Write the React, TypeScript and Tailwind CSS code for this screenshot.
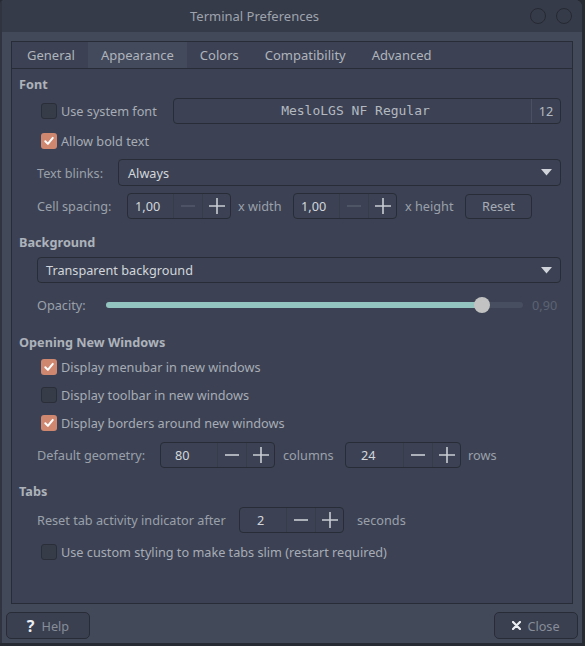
import React from "react";

const Check = ({ checked }: { checked: boolean }) =>
  checked ? (
    <div className="w-[16px] h-[16px] rounded-[3px] bg-[#d08770] flex items-center justify-center shrink-0">
      <svg width="12" height="12" viewBox="0 0 12 12">
        <path d="M2.3 6.3 L4.9 8.9 L9.8 2.9" stroke="#ffffff" strokeWidth="2" fill="none" strokeLinecap="round" strokeLinejoin="round" />
      </svg>
    </div>
  ) : (
    <div className="w-[16px] h-[16px] rounded-[3px] bg-[#373c49] border border-[#2a2e38] shrink-0" />
  );

const CheckRow = ({ checked, label, extra }: { checked: boolean; label: string; extra?: string }) => (
  <div className={`flex items-center h-[20px] pl-[22px] ${extra ?? ""}`}>
    <Check checked={checked} />
    <span className="ml-[4px] text-[#a7acb6]">{label}</span>
  </div>
);

const Minus = ({ dim }: { dim?: boolean }) => (
  <svg width="14" height="14" viewBox="0 0 14 14">
    <path d="M0 7 H14" stroke={dim ? "#535a6a" : "#c9cdd4"} strokeWidth="1.6" />
  </svg>
);
const Plus = () => (
  <svg width="16" height="16" viewBox="0 0 16 16">
    <path d="M0 8 H16 M8 0 V16" stroke="#c9cdd4" strokeWidth="1.6" />
  </svg>
);

const Spin = ({
  value,
  wClass,
  padClass,
  minusDim,
}: {
  value: string;
  wClass: string;
  padClass: string;
  minusDim?: boolean;
}) => (
  <div className={`flex h-[26px] rounded-[4px] border border-[#282c36] bg-[#3c4253] ${wClass}`}>
    <div className={`flex-1 flex items-center text-[#d2d6dc] ${padClass}`}>{value}</div>
    <div className="w-[29px] flex items-center justify-center border-l border-[#363c4a]">
      <Minus dim={minusDim} />
    </div>
    <div className="w-[28px] flex items-center justify-center border-l border-[#363c4a]">
      <Plus />
    </div>
  </div>
);

const Arrow = () => (
  <svg width="11" height="7" viewBox="0 0 11 7">
    <path d="M0 0 H11 L5.5 6.5 Z" fill="#d0d4da" />
  </svg>
);

export default function App() {
  return (
    <div
      className="w-[585px] h-[646px] bg-[#262a32] text-[12.7px] leading-[18px] overflow-hidden"
      style={{ fontFamily: '"Noto Sans", "Open Sans", sans-serif' }}
    >
      <div className="w-[582px] h-[643px] flex flex-col bg-[#424959] rounded-tl-[4px] rounded-tr-[7px] border-l-2 border-[#2f3440] overflow-hidden">
        {/* Title bar */}
        <div className="h-[32px] bg-[#363b49] flex items-center shrink-0">
          <div className="flex-1 text-center pr-[23px] text-[#9ea3ad] text-[13px]">Terminal Preferences</div>
          <div className="flex gap-[10px] pr-[10px]">
            <div className="w-[16px] h-[16px] rounded-full border-[1.5px] border-[#252932]" />
            <div className="w-[16px] h-[16px] rounded-full border-[1.5px] border-[#252932]" />
          </div>
        </div>

        {/* Body */}
        <div className="pl-[9px] pt-[9px]">
          <div className="w-[562px] h-[563px] border border-[#282c36] bg-[#3c4253] flex flex-col">
            {/* Tabs */}
            <div className="h-[27px] border-b border-[#282c36] flex pl-[2px] text-[#afb4bd] text-[13px] shrink-0">
              <div className="px-[13px] flex items-center">General</div>
              <div className="px-[13px] flex items-center bg-[#434a5b]">Appearance</div>
              <div className="px-[13px] flex items-center">Colors</div>
              <div className="px-[13px] flex items-center">Compatibility</div>
              <div className="px-[13px] flex items-center">Advanced</div>
            </div>

            {/* Content */}
            <div className="pl-[7px] pr-[11px] pt-[6px] flex flex-col">
              <div className="h-[18px] font-bold text-[#adb2bb]">Font</div>

              <div className="mt-[5px] h-[26px] flex items-center">
                <div className="w-[154px] flex items-center pl-[22px]">
                  <Check checked={false} />
                  <span className="ml-[4px] text-[#a7acb6]">Use system font</span>
                </div>
                <div className="flex-1 h-[26px] flex rounded-[4px] border border-[#282c36] bg-[#3c4253]">
                  <div
                    className="flex-1 flex items-center justify-center text-[#b4b9c1] pl-[6px] text-[13px]"
                    style={{ fontFamily: '"DejaVu Sans Mono", "Liberation Mono", monospace' }}
                  >
                    MesloLGS NF Regular
                  </div>
                  <div className="w-[29px] flex items-center justify-center border-l border-[#4a5163] text-[#b4b9c1]">
                    12
                  </div>
                </div>
              </div>

              <CheckRow checked={true} label="Allow bold text" extra="mt-[7px]" />

              <div className="mt-[8px] h-[27px] flex items-center pl-[18px]">
                <div className="w-[81px] text-[#9aa0ab]">Text blinks:</div>
                <div className="flex-1 h-[27px] flex items-center justify-between rounded-[4px] border border-[#282c36] bg-[#3c4253] pl-[9px] pr-[8px]">
                  <span className="text-[#d2d6dc]">Always</span>
                  <Arrow />
                </div>
              </div>

              <div className="mt-[7px] h-[26px] flex items-center pl-[18px]">
                <div className="w-[90px] text-[#9aa0ab]">Cell spacing:</div>
                <Spin value="1,00" wClass="w-[104px]" padClass="pl-[7px]" minusDim />
                <div className="w-[62px] pl-[7px] text-[#9aa0ab]">x width</div>
                <Spin value="1,00" wClass="w-[104px]" padClass="pl-[7px]" minusDim />
                <div className="w-[68px] pl-[8px] text-[#9aa0ab]">x height</div>
                <div className="w-[67px] h-[25px] rounded-[4px] border border-[#282c36] bg-[#3c4253] flex items-center justify-center text-[#a7acb6]">
                  Reset
                </div>
              </div>

              <div className="mt-[14px] h-[18px] font-bold text-[#adb2bb]">Background</div>

              <div className="mt-[6px] ml-[18px] h-[26px] flex items-center justify-between rounded-[4px] border border-[#282c36] bg-[#3c4253] pl-[8px] pr-[8px]">
                <span className="text-[#d2d6dc]">Transparent background</span>
                <Arrow />
              </div>

              <div className="mt-[12px] h-[20px] flex items-center pl-[18px]">
                <div className="w-[69px] text-[#9aa0ab]">Opacity:</div>
                <div className="relative w-[417px] h-[6px] rounded-full bg-[#474e5f]">
                  <div className="absolute left-0 top-0 h-[6px] w-[376px] rounded-full bg-[#93c4bf]" />
                  <div className="absolute left-[368px] top-[-5px] w-[16px] h-[16px] rounded-full bg-[#c2c2c2]" />
                </div>
                <div className="ml-[9px] text-[#5b6273]">0,90</div>
              </div>

              <div className="mt-[18px] h-[18px] font-bold text-[#adb2bb]">Opening New Windows</div>

              <CheckRow checked={true} label="Display menubar in new windows" extra="mt-[6px]" />
              <CheckRow checked={false} label="Display toolbar in new windows" extra="mt-[8px]" />
              <CheckRow checked={true} label="Display borders around new windows" extra="mt-[8px]" />

              <div className="mt-[9px] h-[26px] flex items-center pl-[18px]">
                <div className="w-[123px] text-[#9aa0ab]">Default geometry:</div>
                <Spin value="80" wClass="w-[115px]" padClass="pl-[14px]" />
                <div className="w-[70px] pl-[8px] text-[#9aa0ab]">columns</div>
                <Spin value="24" wClass="w-[116px]" padClass="pl-[15px]" />
                <div className="pl-[7px] text-[#9aa0ab]">rows</div>
              </div>

              <div className="mt-[14px] h-[18px] font-bold text-[#adb2bb]">Tabs</div>

              <div className="mt-[7px] h-[26px] flex items-center pl-[18px]">
                <div className="w-[202px] text-[#9aa0ab]">Reset tab activity indicator after</div>
                <Spin value="2" wClass="w-[105px]" padClass="pl-[17px]" />
                <div className="pl-[13px] text-[#9aa0ab]">seconds</div>
              </div>

              <CheckRow checked={false} label="Use custom styling to make tabs slim (restart required)" extra="mt-[9px]" />
            </div>
          </div>

          {/* Buttons */}
          <div className="mt-[8px] flex justify-between pr-[4px] -ml-[5px]">
            <div className="w-[84px] h-[27px] rounded-[5px] border border-[#282c36] bg-[#3a4050] flex items-center justify-center gap-[7px]">
              <span className="text-[#eceff3] font-bold text-[16px] leading-[18px]">?</span>
              <span className="text-[#878d99]">Help</span>
            </div>
            <div className="w-[84px] h-[27px] rounded-[5px] border border-[#282c36] bg-[#3a4050] flex items-center justify-center gap-[6px]">
              <svg width="9" height="9" viewBox="0 0 9 9">
                <path d="M1 1 L8 8 M8 1 L1 8" stroke="#eceff3" strokeWidth="2.2" strokeLinecap="round" />
              </svg>
              <span className="text-[#878d99]">Close</span>
            </div>
          </div>
        </div>
      </div>
    </div>
  );
}
